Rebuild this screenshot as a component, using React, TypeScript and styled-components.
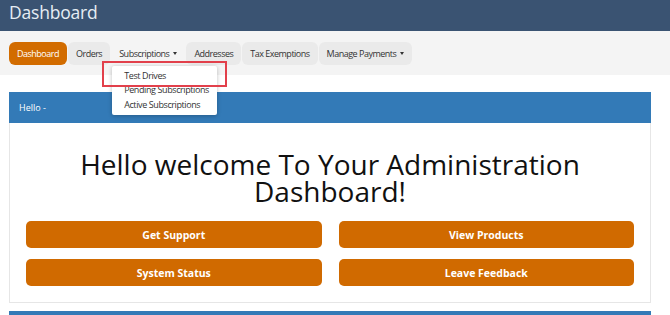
import React from 'react'
import styled, { createGlobalStyle } from 'styled-components'

const Global = createGlobalStyle`
  body {
    margin: 0;
    background: #fff;
    font-family: "Open Sans", "Noto Sans", sans-serif;
    overflow: hidden;
  }
`

const navItems = [
  { label: 'Dashboard', variant: 'active' },
  { label: 'Orders', variant: 'pill' },
  { label: 'Subscriptions', variant: 'plain', caret: true },
  { label: 'Addresses', variant: 'pill' },
  { label: 'Tax Exemptions', variant: 'pill' },
  { label: 'Manage Payments', variant: 'pill', caret: true },
] as const

const subItems = ['Test Drives', 'Pending Subscriptions', 'Active Subscriptions']

const actions = ['Get Support', 'View Products', 'System Status', 'Leave Feedback']

const App = () => {
  return (
    <>
      <Global />
      <Header>
        <Title>Dashboard</Title>
      </Header>
      <NavBar>
        {navItems.map((item) => (
          <NavWrap key={item.label}>
            <NavItem $variant={item.variant}>
              {item.label}
              {'caret' in item && item.caret && <Caret />}
            </NavItem>
            {item.label === 'Subscriptions' && (
              <Menu>
                {subItems.map((s) => (
                  <MenuItem key={s}>{s}</MenuItem>
                ))}
                <Highlight />
              </Menu>
            )}
          </NavWrap>
        ))}
      </NavBar>
      <Main>
        <Panel>
          <PanelHead>Hello -</PanelHead>
          <PanelBody>
            <Welcome>
              Hello welcome To Your Administration
              <br />
              Dashboard!
            </Welcome>
            <Grid>
              {actions.map((a) => (
                <ActionButton key={a}>{a}</ActionButton>
              ))}
            </Grid>
          </PanelBody>
        </Panel>
        <NextPanel />
      </Main>
    </>
  )
}

export default App

const Header = styled.div`
  height: 31px;
  background: #3a5372;
  display: flex;
  align-items: center;
  padding-left: 9px;
`
const Title = styled.h1`
  margin: 0;
  font-size: 17.5px;
  font-weight: 400;
  letter-spacing: -0.2px;
  color: #e6edf4;
  line-height: 1;
  margin-top: -6px;
`
const NavBar = styled.div`
  height: 44px;
  background: #f4f4f4;
  display: flex;
  align-items: center;
  padding: 0 9px;
  gap: 1px;
`
const NavWrap = styled.div`
  position: relative;
`
const NavItem = styled.div<{ $variant: 'active' | 'pill' | 'plain' }>`
  height: 23px;
  padding: 0 8px;
  display: flex;
  align-items: center;
  border-radius: 6px;
  font-size: 9px;
  letter-spacing: -0.5px;
  color: ${(p) => (p.$variant === 'active' ? '#fff' : '#333')};
  background: ${(p) =>
    p.$variant === 'active' ? '#d26c00' : p.$variant === 'pill' ? '#eaeaea' : 'transparent'};
  white-space: nowrap;
`
const Caret = styled.span`
  display: inline-block;
  margin-left: 4px;
  border-left: 2.5px solid transparent;
  border-right: 2.5px solid transparent;
  border-top: 3px solid #333;
`
const Menu = styled.div`
  position: absolute;
  top: 24px;
  left: 1px;
  width: 105px;
  background: #fff;
  box-shadow: 0 1px 4px rgba(0, 0, 0, 0.25);
  border-radius: 2px;
  padding: 3px 0;
  z-index: 5;
`
const MenuItem = styled.div`
  font-size: 9px;
  letter-spacing: -0.4px;
  color: #333;
  padding: 0 12px;
  line-height: 14.5px;
  white-space: nowrap;
`
const Highlight = styled.div`
  position: absolute;
  left: -10px;
  top: -5px;
  width: 121px;
  height: 22px;
  border: 2px solid #e2404b;
`
const Main = styled.div`
  padding: 17px 19px 0 9px;
`
const Panel = styled.div`
  border: 1px solid #e6e6e6;
  border-top: none;
`
const PanelHead = styled.div`
  height: 31px;
  margin: 0 -1px;
  background: #337ab7;
  color: #fff;
  font-size: 9px;
  display: flex;
  align-items: center;
  padding-left: 10px;
`
const PanelBody = styled.div`
  padding: 28px 16px 16px;
  background: #fff;
`
const Welcome = styled.h2`
  margin: 0 0 16px;
  text-align: center;
  font-weight: 400;
  font-size: 28px;
  line-height: 27px;
  color: #111;
`
const Grid = styled.div`
  display: grid;
  grid-template-columns: 1fr 1fr;
  column-gap: 17px;
  row-gap: 11px;
`
const ActionButton = styled.div`
  height: 27px;
  border-radius: 5px;
  background: #d06a00;
  color: #fff;
  font-weight: 700;
  font-size: 10.5px;
  display: flex;
  align-items: center;
  justify-content: center;
`
const NextPanel = styled.div`
  margin-top: 8px;
  height: 10px;
  background: #337ab7;
`
